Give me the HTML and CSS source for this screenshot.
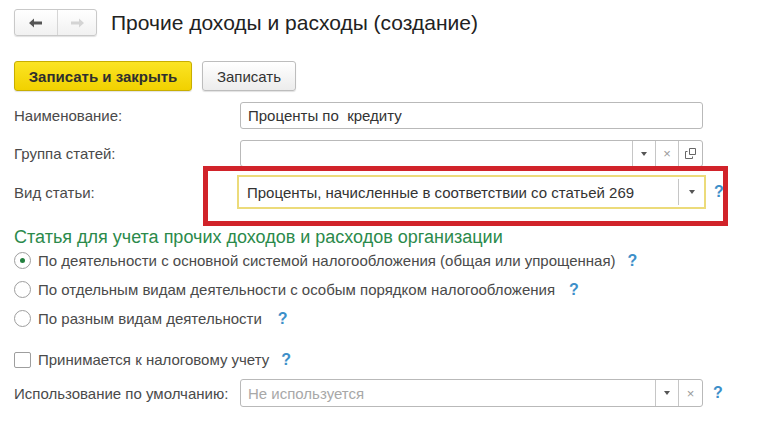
FILE: index.html
```html
<!DOCTYPE html>
<html lang="ru">
<head>
<meta charset="utf-8">
<title>Прочие доходы и расходы (создание)</title>
<link rel="stylesheet" href="styles.css">
</head>
<body>
<div class="page">
  <div class="header">
    <div class="nav">
      <button class="nav-btn back" type="button">
        <svg width="14" height="10" viewBox="0 0 14 10"><path d="M0 5 L5 0.5 L5 3.5 L13 3.5 L13 6.5 L5 6.5 L5 9.5 Z" fill="#555"/></svg>
      </button>
      <button class="nav-btn fwd" type="button">
        <svg width="14" height="10" viewBox="0 0 14 10"><path d="M14 5 L9 0.5 L9 3.5 L1 3.5 L1 6.5 L9 6.5 L9 9.5 Z" fill="#d4d4d4"/></svg>
      </button>
    </div>
    <h1 class="title">Прочие доходы и расходы (создание)</h1>
  </div>

  <div class="toolbar">
    <button class="btn btn-primary" type="button">Записать и закрыть</button>
    <button class="btn" type="button">Записать</button>
  </div>

  <div class="form">
    <div class="row row-name">
      <span class="label">Наименование:</span>
      <div class="field"><span class="value">Проценты по&nbsp; кредиту</span></div>
    </div>

    <div class="row row-group">
      <span class="label">Группа статей:</span>
      <div class="field">
        <span class="value"></span>
        <span class="fbtn"><span class="tri"></span></span>
        <span class="fbtn clear">×</span>
        <span class="fbtn">
          <svg width="11" height="11" viewBox="0 0 11 11"><path d="M4.5 0.5 H10.5 V6.5 H4.5 Z" fill="none" stroke="#666"/><path d="M2.5 3.5 H0.5 V10.5 H7.5 V8.5" fill="none" stroke="#666"/></svg>
        </span>
      </div>
    </div>

    <div class="row row-kind">
      <span class="label">Вид статьи:</span>
      <div class="field field-active">
        <span class="value">Проценты, начисленные в соответствии со статьей 269</span>
        <span class="fbtn"><span class="tri"></span></span>
      </div>
      <span class="help">?</span>
      <div class="highlight"></div>
    </div>

    <h2 class="section">Статья для учета прочих доходов и расходов организации</h2>

    <div class="radio-list">
      <label class="radio-row r1"><span class="radio checked"></span><span>По деятельности с основной системой налогообложения (общая или упрощенная)</span><span class="help">?</span></label>
      <label class="radio-row r2"><span class="radio"></span><span>По отдельным видам деятельности с особым порядком налогообложения</span><span class="help">?</span></label>
      <label class="radio-row r3"><span class="radio"></span><span>По разным видам деятельности</span><span class="help">?</span></label>
    </div>

    <label class="check-row"><span class="checkbox"></span><span>Принимается к налоговому учету</span><span class="help">?</span></label>

    <div class="row row-default">
      <span class="label">Использование по умолчанию:</span>
      <div class="field">
        <span class="value placeholder">Не используется</span>
        <span class="fbtn"><span class="tri"></span></span>
        <span class="fbtn clear">×</span>
      </div>
      <span class="help">?</span>
    </div>
  </div>
</div>
</body>
</html>
```

FILE: styles.css
```css
* { box-sizing: border-box; }
html, body { margin: 0; padding: 0; background: #fff; }
body {
  font-family: Arial, "Liberation Sans", sans-serif;
  font-size: 15px;
  color: #4a4a4a;
  width: 780px;
  height: 422px;
  overflow: hidden;
}
.page { padding: 9px 0 0 14px; }

.header { display: flex; align-items: center; height: 27px; }
.nav {
  display: flex;
  width: 83px;
  height: 27px;
  border: 1px solid #c9c9c9;
  border-radius: 3px;
  background: linear-gradient(#ffffff, #f1f1f1);
  box-shadow: 0 1px 1px rgba(0,0,0,0.12);
}
.nav-btn {
  flex: 1;
  border: 0;
  background: transparent;
  padding: 0;
  display: flex;
  align-items: center;
  justify-content: center;
}
.nav-btn.back { border-right: 1px solid #d6d6d6; flex: 0 0 43px; }
.title {
  margin: 0 0 0 14px;
  font-weight: normal;
  font-size: 21px;
  color: #222;
  line-height: 27px;
}

.toolbar { display: flex; gap: 10px; margin-top: 25px; height: 30px; }
.btn {
  font-family: inherit;
  font-size: 15px;
  color: #333;
  height: 30px;
  padding: 0;
  border: 1px solid #bdbdbd;
  border-radius: 3px;
  background: linear-gradient(#ffffff, #ececec);
  box-shadow: 0 1px 1px rgba(0,0,0,0.12);
}
.btn-primary {
  width: 178px;
  font-weight: bold;
  color: #2e2e2e;
  border-color: #c8ae00;
  background: linear-gradient(#fbe424, #f1d100);
}
.btn:not(.btn-primary) { width: 94px; }

.form { margin-top: 11px; }
.row { display: flex; align-items: center; height: 27px; position: relative; }
.label { width: 226px; flex: 0 0 226px; color: #4a4a4a; }
.field {
  display: flex;
  width: 463px;
  height: 27px;
  border: 1px solid #b9b9b9;
  border-radius: 3px;
  background: #fff;
  align-items: stretch;
  overflow: hidden;
}
.value {
  flex: 1;
  padding-left: 7px;
  display: flex;
  align-items: center;
  color: #333;
  white-space: nowrap;
}
.placeholder { color: #a8a8a8; }
.fbtn {
  width: 23px;
  flex: 0 0 23px;
  border-left: 1px solid #c6c6c6;
  display: flex;
  align-items: center;
  justify-content: center;
  color: #9a9a9a;
  font-size: 13px;
}
.fbtn:last-child { width: 24px; flex-basis: 24px; }
.tri {
  width: 0; height: 0;
  border-left: 3px solid transparent;
  border-right: 3px solid transparent;
  border-top: 4px solid #555;
}
.help {
  color: #3d8fc9;
  font-weight: bold;
  font-size: 16px;
  margin-left: 10px;
}

.row-group { margin-top: 11px; }
.row-kind { margin-top: 8px; height: 34px; }
.row-kind .label { flex-basis: 223px; width: 223px; }
.field-active {
  width: 469px;
  height: 34px;
  border: 2px solid #ecdb7a;
  border-radius: 0;
}
.field-active .value { padding-left: 8px; }
.field-active .fbtn { width: 26px; flex-basis: 26px; margin: 2px 0; }
.row-kind .help { margin-left: 8px; }
.highlight {
  position: absolute;
  left: 189px;
  top: -9px;
  width: 525px;
  height: 60px;
  border: 5px solid #d1232a;
  pointer-events: none;
}

.section {
  margin: 17px 0 0 0;
  font-weight: normal;
  font-size: 18px;
  line-height: 22px;
  color: #2b8a4b;
}
.radio-list { margin-top: -2px; }
.radio-row, .check-row {
  display: flex;
  align-items: center;
  height: 29px;
  color: #4a4a4a;
}
.radio-row > span:nth-child(2), .check-row > span:nth-child(2) { margin-left: 7px; }
.radio {
  width: 17px; height: 17px;
  border: 1px solid #9e9e9e;
  border-radius: 50%;
  background: #fff;
  position: relative;
  flex: 0 0 17px;
}
.radio.checked::after {
  content: "";
  position: absolute;
  left: 5px; top: 5px;
  width: 5px; height: 5px;
  border-radius: 50%;
  background: #23803f;
}
.r1 .help { margin-left: 12px; }
.r2 .help { margin-left: 14px; }
.r3 .help { margin-left: 16px; }
.check-row { margin-top: 12px; }
.checkbox {
  width: 17px; height: 16px;
  border: 1px solid #9e9e9e;
  border-radius: 2px;
  flex: 0 0 17px;
}
.check-row .help { margin-left: 12px; }
.row-default { margin-top: 5px; height: 28px; }
.row-default .field { height: 28px; }
```
